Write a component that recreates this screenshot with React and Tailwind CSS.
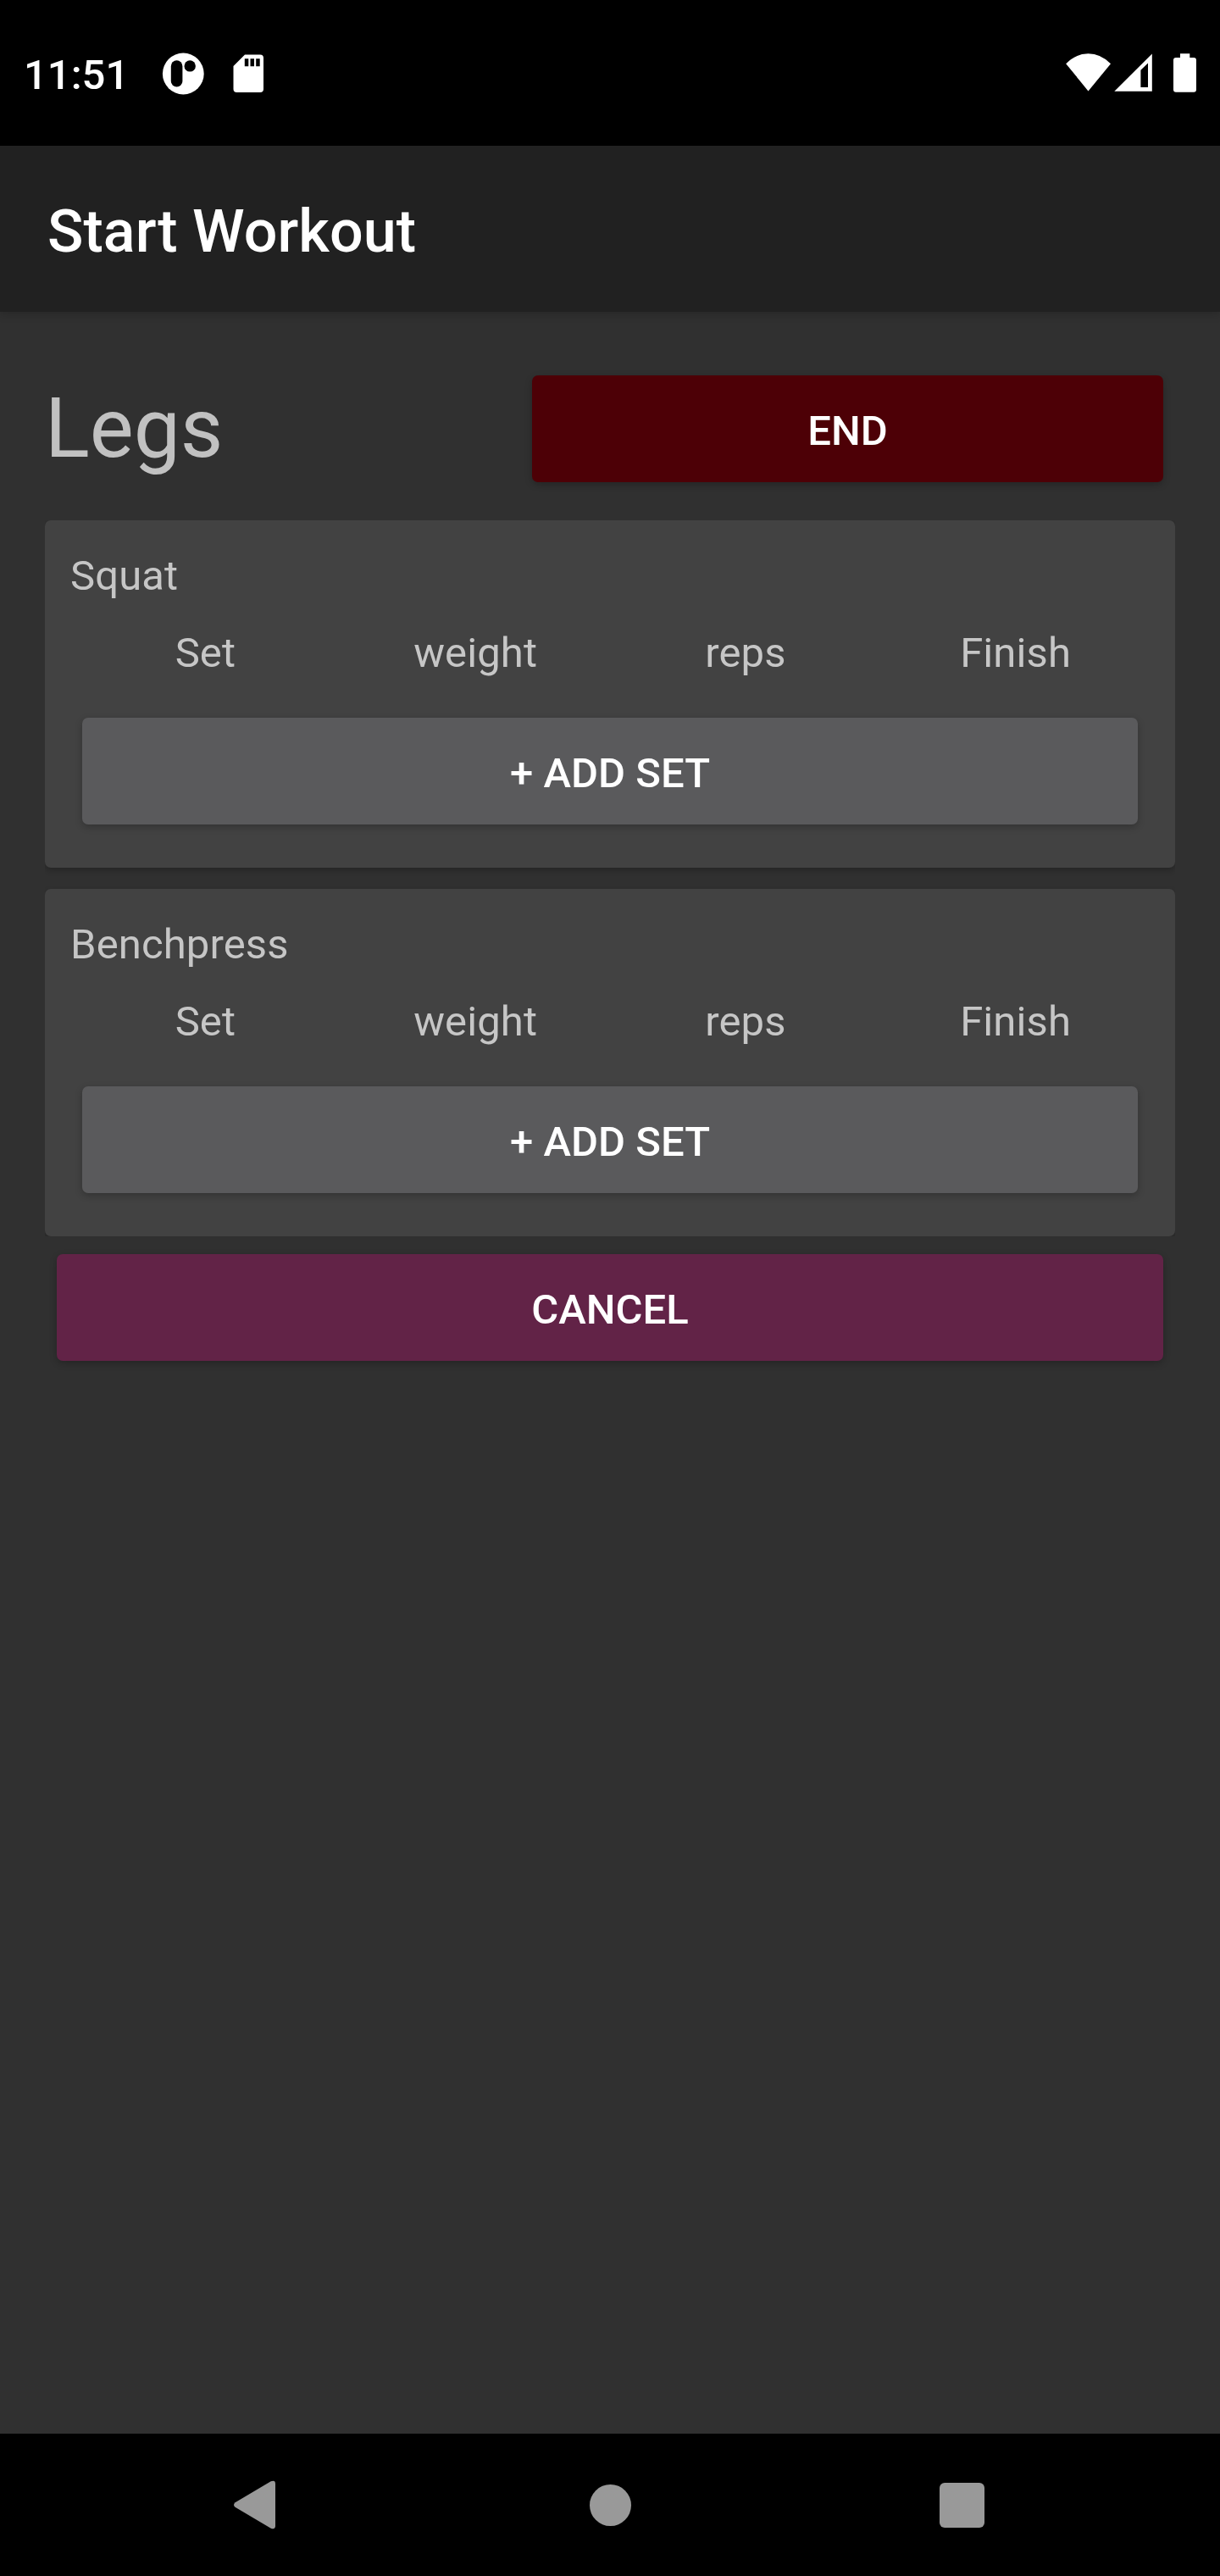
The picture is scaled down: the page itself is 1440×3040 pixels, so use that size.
const exercises = ["Squat", "Benchpress"];
const columns = ["Set", "weight", "reps", "Finish"];

function StatusBar() {
  return (
    <header className="flex h-[172px] items-start justify-between bg-black pt-[56px] pl-[28px] text-white">
      <div className="flex h-[64px] items-center">
        <span className="w-[158px] pt-[2px] text-[49px] leading-[64px] font-medium">11:51</span>
        <svg className="-mt-[3px] h-[50px] w-[60px]" viewBox="186 61.5 60 50" fill="currentColor">
          <circle cx="216.3" cy="86.5" r="24.4" />
          <rect x="201.8" y="70.8" width="13.6" height="31.2" rx="6.8" fill="#000" />
          <circle cx="224.2" cy="77.4" r="6.7" fill="#000" />
        </svg>
        <svg className="-mt-[3px] ml-[14px] h-[50px] w-[70px]" viewBox="260 61.5 70 50" fill="currentColor">
          <path d="M289 64H307a4 4 0 0 1 4 4V104.600a4 4 0 0 1-4 4H279.500a4 4 0 0 1-4-4V77.500Z" />
          <path fill="#000" d="M288.800 68.700h4.500v9h-4.500zM295.500 68.700h4.500v9h-4.500zM302.200 68.700h4.500v9h-4.500z" />
        </svg>
      </div>
      <svg className="h-[64px] w-[190px]" viewBox="1250 56 190 64" fill="currentColor">
        <path d="M1284.500 107.400L1258.200 75.200Q1270 63.300 1284.500 63.300T1311 75.200Z" />
        <path fillRule="evenodd" d="M1315.300 107.800L1359.800 63.400V107.800ZM1346.400 82.800V103H1355V74.500Z" />
        <path d="M1393 63.200H1404.300V68H1409a3 3 0 0 1 3 3V105.700a3 3 0 0 1-3 3H1388a3 3 0 0 1-3-3V71a3 3 0 0 1 3-3H1393Z" />
      </svg>
    </header>
  );
}

function Button({ children, className }) {
  return (
    <button
      className={`flex h-[126px] items-center justify-center rounded-[7px] pt-[6px] text-[49px] leading-[66px] font-medium tracking-[0.05px] text-white shadow-[0_3px_8px_rgba(0,0,0,0.24)] ${className}`}
    >
      {children}
    </button>
  );
}

function ExerciseCard({ name }) {
  return (
    <section className="flex h-[410px] flex-col rounded-[7px] bg-[#424242] pt-[33px] pr-[29px] pl-[30px] text-[49px] leading-[66px] tracking-[0.12px] text-[#c6c6c6] shadow-[0_3px_7px_rgba(0,0,0,0.24)]">
      <h2>{name}</h2>
      <div className="mt-[25px] grid grid-cols-4 text-center">
        {columns.map((c) => (
          <span key={c}>{c}</span>
        ))}
      </div>
      <Button className="mt-[43px] mr-[15px] ml-[14px] bg-[#5a5a5c]">+ ADD SET</Button>
    </section>
  );
}

function NavBar() {
  return (
    <nav className="flex h-[168px] items-center bg-black pl-[275px] text-[#999999]">
      <svg className="h-[60px] w-[60px]" viewBox="275 2926 60 60" fill="currentColor">
        <path d="M277.600 2953.200L319.800 2928.300Q325 2926.400 325 2931.200V2980.800Q325 2985.600 319.800 2983.700L277.600 2958.800Q274.400 2956 277.600 2953.200Z" />
      </svg>
      <span className="ml-[360.5px] h-[49px] w-[49px] rounded-full bg-current" />
      <span className="ml-[364px] h-[53px] w-[53px] rounded-[6px] bg-current" />
    </nav>
  );
}

export default function App() {
  return (
    <div className="flex h-[3040px] w-[1440px] flex-col overflow-hidden bg-[#303030] font-[Roboto,sans-serif]">
      <StatusBar />
      <div className="flex h-[196px] items-center bg-[#212121] px-[56px] pt-[6px] shadow-[0_3px_10px_rgba(0,0,0,0.18)]">
        <h1 className="text-[70px] leading-[94px] font-medium tracking-[0.08px] text-white">Start Workout</h1>
      </div>
      <main className="flex flex-1 flex-col px-[53px] pt-[75px]">
        <div className="flex items-center justify-between pr-[14px]">
          <h2 className="text-[98px] leading-[126px] text-[#c1c1c1]">Legs</h2>
          <Button className="w-[745px] bg-[#4d0006]">END</Button>
        </div>
        <div className="mt-[45px] flex flex-col gap-[25px] overflow-hidden">
          {exercises.map((name) => (
            <ExerciseCard key={name} name={name} />
          ))}
        </div>
        <Button className="mx-[14px] mt-[21px] bg-[#622347]">CANCEL</Button>
      </main>
      <NavBar />
    </div>
  );
}
